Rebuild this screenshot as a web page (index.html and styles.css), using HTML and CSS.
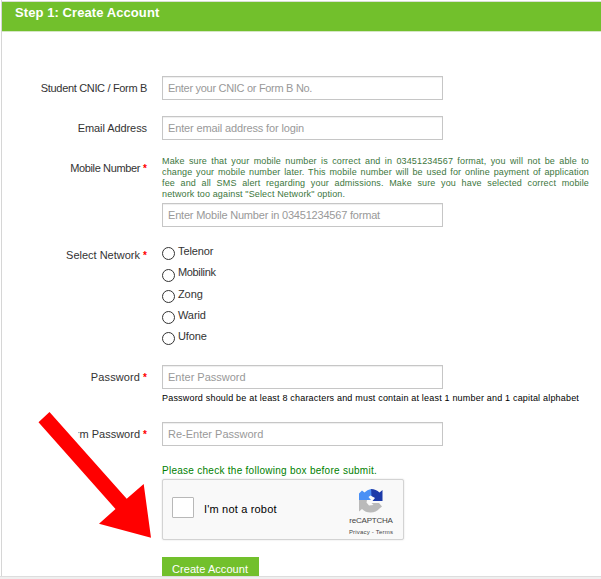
FILE: index.html
```html
<!DOCTYPE html>
<html lang="en">
<head>
<meta charset="utf-8">
<title>Create Account</title>
<link rel="stylesheet" href="styles.css">
</head>
<body>
<main class="panel">
  <h1 class="title"><span>Step 1: Create Account</span></h1>
  <form class="form">
    <div class="row cnic">
      <label class="label"><span>Student CNIC / Form B</span></label>
      <div class="field"><div class="input"><span>Enter your CNIC or Form B No.</span></div></div>
    </div>
    <div class="row email">
      <label class="label"><span>Email Address</span></label>
      <div class="field"><div class="input"><span>Enter email address for login</span></div></div>
    </div>
    <div class="row mobile">
      <label class="label"><span>Mobile Number</span> <b>*</b></label>
      <div class="field">
        <div class="note">
          <p>Make sure that your mobile number is correct and in 03451234567 format, you will not be able to</p>
          <p>change your mobile number later. This mobile number will be used for online payment of application</p>
          <p>fee and all SMS alert regarding your admissions. Make sure you have selected correct mobile</p>
          <p class="last">network too against "Select Network" option.</p>
        </div>
        <div class="input"><span>Enter Mobile Number in 03451234567 format</span></div>
      </div>
    </div>
    <div class="row network">
      <label class="label"><span>Select Network</span> <b>*</b></label>
      <div class="field radios">
        <div class="radio"><i></i><span>Telenor</span></div>
        <div class="radio tall"><i></i><span>Mobilink</span></div>
        <div class="radio"><i></i><span>Zong</span></div>
        <div class="radio"><i></i><span>Warid</span></div>
        <div class="radio"><i></i><span>Ufone</span></div>
      </div>
    </div>
    <div class="row password">
      <label class="label"><span>Password</span> <b>*</b></label>
      <div class="field">
        <div class="input"><span>Enter Password</span></div>
        <p class="hint"><span>Password should be at least 8 characters and must contain at least 1 number and 1 capital alphabet</span></p>
      </div>
    </div>
    <div class="row confirm">
      <label class="label"><span>rm Password</span> <b>*</b></label>
      <div class="field"><div class="input"><span>Re-Enter Password</span></div></div>
    </div>
    <div class="row submit">
      <div></div>
      <div class="field">
        <p class="check"><span>Please check the following box before submit.</span></p>
        <div class="captcha">
          <div class="box"></div>
          <span class="robot">I'm not a robot</span>
          <div class="brand">
            <svg width="24" height="25" viewBox="0 0 24 25">
              <path fill="#4a90f5" d="M3 2.500L5.500 4.500A12 12 0 0 1 12 1L14 8.500L11.500 7.500L9.500 9L12 12H0V5.500Z"/>
              <path fill="#1c3aa9" d="M12 1A12 12 0 0 1 20.500 4.500L23.500 2V13H13.500L16 10L12.500 8Z"/>
              <path fill="#bababa" d="M0 12H8L7.500 14.500L10 17.500L14.500 17L12.500 15H20L23 18.500L20.500 20.500A12 12 0 0 1 3 21L0 23.500Z"/>
            </svg>
            <span class="name">reCAPTCHA</span>
            <span class="terms">Privacy - Terms</span>
          </div>
        </div>
        <div class="button"><span>Create Account</span></div>
      </div>
    </div>
  </form>
</main>
<svg class="arrow" width="120" height="130" viewBox="35 410 120 130">
  <path fill="#fff" d="M60 425H78.500V445H60Z"/>
  <path fill="#f00" d="M49.500 412L38.500 422.300L115.500 509L99 523.700L151 537.700L143.700 484L126.700 498.700Z"/>
</svg>
<footer class="edge"></footer>
</body>
</html>
```

FILE: styles.css
```css
* { box-sizing: border-box; }
body {
  margin: 0;
  height: 579px;
  overflow: hidden;
  display: flex;
  flex-direction: column;
  background: #fff;
  font: 11px/14px "Liberation Sans", Arial, sans-serif;
  color: #333;
}
p, h1 { margin: 0; }
span { white-space: nowrap; }
.panel {
  flex: none;
  height: 576px;
  margin-left: 1px;
  padding-top: 1px;
  border-left: 1px solid #d6d6d6;
  overflow: hidden;
}
.title {
  height: 31px;
  padding: 2px 0 0 13px;
  background: #72c02c;
  border-top: 1px solid #d9dfd3;
  border-bottom: 1px solid #d5e6c5;
  color: #fff;
  font-size: 13px;
  line-height: 17px;
}
.title span { letter-spacing: 0.080px; }
.form { padding-top: 44px; }
.row {
  display: grid;
  grid-template-columns: 145px 417px;
  column-gap: 15px;
}
.label {
  text-align: right;
  padding-top: 5px;
}
.label b {
  color: #f00;
  font-size: 10px;
  font-weight: 700;
}
.cnic, .email { height: 40px; }
.cnic .label { letter-spacing: -0.330px; }
.cnic .input { letter-spacing: -0.300px; }
.email .label { letter-spacing: -0.080px; }
.email .input { letter-spacing: -0.140px; }
.mobile { height: 91px; }
.mobile .label span { letter-spacing: -0.370px; }
.mobile .input { letter-spacing: -0.200px; }
.network { height: 118px; }
.network .label { padding-top: 1px; }
.password { height: 57px; }
.password .label span { letter-spacing: 0.110px; }
.confirm { height: 43px; }
.input {
  width: 281px;
  height: 24px;
  border: 1px solid #c6c6c6;
  box-shadow: inset 0 1px 1px #eee;
  padding: 4px 5px;
  color: #999;
}
.note {
  height: 47px;
  color: #3c763d;
  font-size: 9px;
  line-height: 11px;
  letter-spacing: 0.140px;
}
.note p {
  width: 427px;
  text-align-last: justify;
  white-space: nowrap;
}
.note .last { text-align-last: left; }
.radio {
  display: flex;
  height: 21px;
  gap: 3px;
  letter-spacing: -0.100px;
}
.radio.tall { letter-spacing: -0.350px; }
.radios .radio:first-child { height: 22px; }
.radio.tall span { margin-top: -4px; }
.radio i {
  width: 13px;
  height: 13px;
  border: 1px solid #333;
  border-radius: 50%;
}
.radio span { margin-top: -3px; }
.hint {
  padding-top: 3px;
  color: #000;
  font-size: 9px;
  line-height: 12px;
  letter-spacing: 0.192px;
}
.check {
  height: 14px;
  color: #008000;
  font-size: 10px;
  line-height: 12px;
  letter-spacing: 0.270px;
}
.captcha {
  display: grid;
  grid-template-columns: 22px 1fr 60px;
  column-gap: 10px;
  align-items: center;
  width: 242px;
  height: 61px;
  padding-left: 9px;
  border: 1px solid #d3d3d3;
  border-radius: 2px;
  background: #f9f9f9;
  box-shadow: 0 0 2px #ddd;
  color: #000;
}
.robot { letter-spacing: 0.180px; margin-top: -1px; }
.box {
  width: 22px;
  height: 21px;
  margin-top: -4px;
  border: 1px solid #b8b8b8;
  border-radius: 1px;
  background: #fff;
}
.brand {
  display: flex;
  flex-direction: column;
  align-items: center;
  height: 100%;
  padding: 8px 4px 0 0;
  color: #444;
}
.brand svg { flex: none; }
.name { font-size: 8px; line-height: 10px; margin-top: 3px; letter-spacing: -0.200px; }
.terms { font-size: 6px; line-height: 8px; margin-top: 2px; letter-spacing: 0.200px; }
.button {
  width: 97px;
  height: 30px;
  margin-top: 17px;
  padding: 5px 10px;
  background: #72c02c;
  color: #fff;
  letter-spacing: 0.060px;
}
.arrow { position: absolute; left: 35px; top: 410px; }
.edge { height: 3px; background: #efefef; border-top: 1px solid #ddd; }
```
